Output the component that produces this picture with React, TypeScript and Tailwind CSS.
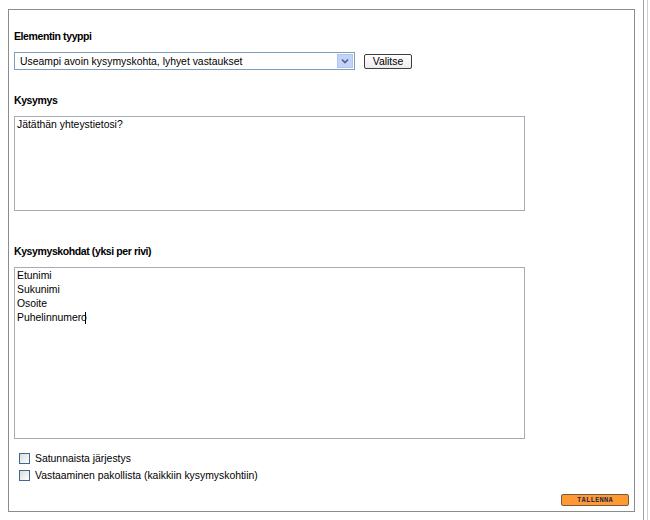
export default function App() {
  const font = "font-['Liberation_Sans','Arial',sans-serif]";
  const heading = "font-bold text-[10.5px] tracking-[-0.4px] leading-[13px] h-[13px]";
  return (
    <div className={`w-[650px] h-[520px] bg-white relative overflow-hidden text-[10.4px] text-black ${font}`}>
      {/* page edge lines on the right */}
      <div className="absolute left-[643px] top-0 h-full w-px bg-[#a0a0a0]" />
      <div className="absolute left-[647px] top-0 h-full w-px bg-[#c8d0dc]" />

      <div className="ml-[8px] mt-[9px] w-[627px] h-[503px] border border-[#8c8c8c] pl-[5px] pt-[20px] flex flex-col">
        <div className={heading}>Elementin tyyppi</div>
        <div className="flex items-center mt-[9px] gap-[9px]">
          <div className="w-[341px] h-[18px] border border-[#7f9db9] flex items-center justify-between pl-[5px] pr-px">
            <span className="leading-[13px]">Useampi avoin kysymyskohta, lyhyet vastaukset</span>
            <span className="w-[16px] h-[14px] bg-[#c3d3f7] border border-[#b2c3ea] flex items-center justify-center">
              <svg width="8" height="6" viewBox="0 0 8 6">
                <path d="M1 1.5 L4 4.5 L7 1.5" fill="none" stroke="#4d6185" strokeWidth="1.6" />
              </svg>
            </span>
          </div>
          <div className="w-[48px] h-[15px] border border-[#3c3c3c] rounded-[2px] bg-gradient-to-b from-white to-[#ececec] flex items-center justify-center leading-[13px]">
            Valitse
          </div>
        </div>

        <div className={`${heading} mt-[24px]`}>Kysymys</div>
        <div className="mt-[9px] w-[511px] h-[95px] border border-[#a5acb5] px-[2px] pt-[1px] leading-[14px]">
          Jätäthän yhteystietosi?
        </div>

        <div className={`${heading} mt-[34px]`}>Kysymyskohdat (yksi per rivi)</div>
        <div className="mt-[9px] w-[511px] h-[172px] border border-[#a5acb5] px-[2px] pt-[1px] leading-[14px]">
          <div>Etunimi</div>
          <div>Sukunimi</div>
          <div>Osoite</div>
          <div className="flex items-center">
            Puhelinnumero<span className="inline-block w-px h-[12px] bg-black -ml-[2px]" />
          </div>
        </div>

        <div className="mt-[13px] flex flex-col gap-[4px] pl-[5px]">
          <label className="flex items-center gap-[5px] h-[13px]">
            <span className="w-[11px] h-[11px] border border-[#3b6a96] bg-gradient-to-br from-[#dcdcd7] to-white" />
            <span className="leading-[13px]">Satunnaista järjestys</span>
          </label>
          <label className="flex items-center gap-[5px] h-[13px]">
            <span className="w-[11px] h-[11px] border border-[#3b6a96] bg-gradient-to-br from-[#dcdcd7] to-white" />
            <span className="leading-[13px]">Vastaaminen pakollista (kaikkiin kysymyskohtiin)</span>
          </label>
        </div>

        <div className="flex justify-end mt-[12px] pr-[5px]">
          <div className="w-[68px] h-[12px] bg-[#ff9933] border border-[#7a5a3a] rounded-[2px] flex items-center justify-center text-[7px] font-bold tracking-[0.3px] text-[#2a2a4a] font-['DejaVu_Sans_Mono',monospace] leading-none">
            TALLENNA
          </div>
        </div>
      </div>
    </div>
  );
}
